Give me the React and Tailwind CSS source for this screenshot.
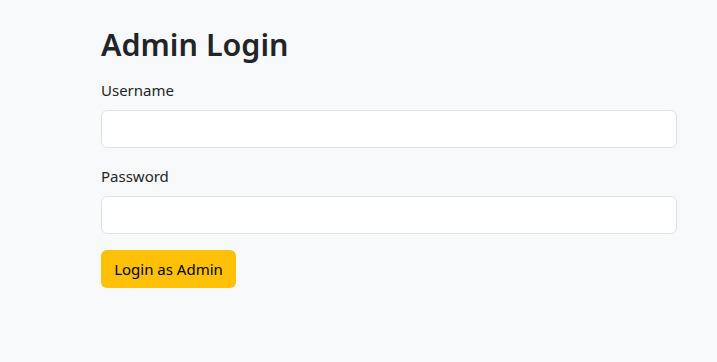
export default function App() {
    return (
        <div
            className="min-h-[362px] bg-[#f8f9fa] text-[#212529]"
            style={{ fontFamily: '"Noto Sans", "Open Sans", sans-serif' }}
        >
            <div className="ml-[101px] w-[576px] pt-[25px]">
                <h1 className="mb-[15px] text-[30.5px] font-semibold leading-[38px]">
                    Admin Login
                </h1>
                <form>
                    <div className="mb-4">
                        <label className="mb-2 block text-[15px] leading-6">
                            Username
                        </label>
                        <input
                            type="text"
                            className="block h-[38px] w-full rounded-md border border-[#dee2e6] bg-white px-3"
                        />
                    </div>
                    <div className="mb-4">
                        <label className="mb-2 block text-[15px] leading-6">
                            Password
                        </label>
                        <input
                            type="password"
                            className="block h-[38px] w-full rounded-md border border-[#dee2e6] bg-white px-3"
                        />
                    </div>
                    <button
                        type="button"
                        className="h-[38px] w-[135px] rounded-md bg-[#ffc107] text-[15px] text-black"
                    >
                        Login as Admin
                    </button>
                </form>
            </div>
        </div>
    );
}
